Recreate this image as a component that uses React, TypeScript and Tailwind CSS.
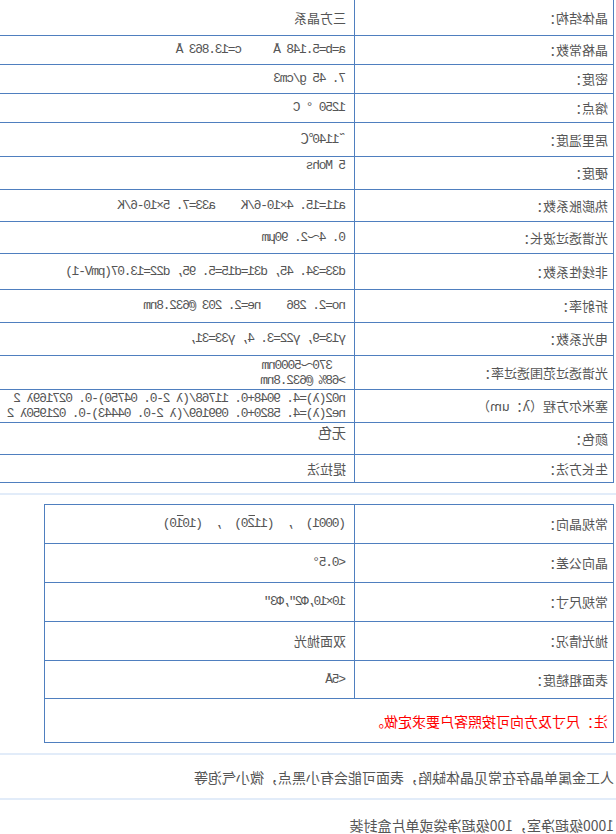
import { ReactNode } from 'react';

type Row = {
  label: ReactNode;
  value: ReactNode;
  h: string;
  top?: boolean;
  cjk?: boolean;
};

const specs: Row[] = [
  { label: '晶体结构：', value: '三方晶系', h: 'h-[36px]', cjk: true },
  { label: '晶格常数：', value: 'a=b=5.148 Å     c=13.863 Å', h: 'h-[29px]' },
  { label: '密度：', value: '7. 45 g/cm3', h: 'h-[29px]' },
  { label: '熔点：', value: '1250 ° C', h: 'h-[29px]' },
  { label: '居里温度：', value: '˜1140℃', h: 'h-[34px]' },
  { label: '硬度：', value: '5 Mohs', h: 'h-[33px]', top: true },
  { label: '热膨胀系数：', value: 'a11=15. 4×10-6/K    a33=7. 5×10-6/K', h: 'h-[32px]' },
  { label: '光谱透过波长：', value: '0. 4～2. 90μm', h: 'h-[32px]' },
  { label: '非线性系数：', value: 'd33=34. 45, d31=d15=5. 95, d22=13.07(pmV-1)', h: 'h-[36px]' },
  { label: '折射率：', value: 'no=2. 286    ne=2. 203 @632.8nm', h: 'h-[33px]' },
  { label: '电光系数：', value: 'γ13=9, γ22=3. 4, γ33=31,', h: 'h-[33px]' },
  {
    label: '光谱透过范围透过率：',
    value: (
      <div className="leading-[15px]">
        <div>  370～5000nm</div>
        <div>&gt;68% @632.8nm</div>
      </div>
    ),
    h: 'h-[34px]',
  },
  {
    label: '塞米尔方程（λ：um）',
    value: (
      <div className="leading-[15px]">
        <div>n02(λ)=4. 9048+0. 11768/(λ 2-0. 04750)-0. 027169λ 2</div>
        <div>ne2(λ)=4. 5820+0. 099169/(λ 2-0. 04443)-0. 021950λ 2</div>
      </div>
    ),
    h: 'h-[33px]',
  },
  { label: '颜色：', value: <span className="text-[14px]">无色</span>, h: 'h-[32px]', top: true, cjk: true },
  { label: '生长方法：', value: '提拉法', h: 'h-[28px]', cjk: true },
];

const options: Row[] = [
  {
    label: '常规晶向：',
    value: (
      <span>
        (0001)  ,  (11<span className="overline">2</span>0)  ,  (10<span className="overline">1</span>0)
      </span>
    ),
    h: 'h-[39px]',
  },
  { label: '晶向公差：', value: '<0.5°', h: 'h-[39px]' },
  { label: '常规尺寸：', value: <span className="tracking-[-1.6px]">10×10,Φ2″,Φ3″</span>, h: 'h-[39px]' },
  { label: '抛光情况：', value: '双面抛光', h: 'h-[39px]', cjk: true },
  { label: '表面粗糙度：', value: '<5Å', h: 'h-[38px]' },
];

const SpecRow = ({ row }: { row: Row }) => (
  <div className={`flex border-b border-[#4f7fbf] ${row.h}`}>
    <div className="flex w-[259px] shrink-0 items-center border-r border-[#4f7fbf] pl-[5px]">
      {row.label}
    </div>
    <div
      className={`flex flex-1 whitespace-pre pl-2 ${row.top ? 'items-start pt-[1px]' : 'items-center'} ${
        row.cjk ? '' : "font-['Liberation_Mono','Noto_Sans_CJK_SC',monospace] tracking-[-1.3px]"
      }`}
    >
      {row.value}
    </div>
  </div>
);

export default function App() {
  return (
    <div className="h-[834px] w-[616px] -scale-x-100 overflow-hidden bg-white font-['Noto_Sans_CJK_SC',sans-serif] text-[13px] leading-[16px] text-[#555]">
      {/* properties */}
      <div className="ml-[2px] w-[640px] border-l border-[#4f7fbf]">
        {specs.map((row, i) => (
          <SpecRow key={i} row={row} />
        ))}
      </div>

      <div className="mt-[10px] h-[2px] bg-[#e2ecf9]" />

      {/* standard options */}
      <div className="ml-[2px] mt-[9px] w-[570px] border border-b-0 border-[#4f7fbf]">
        {options.map((row, i) => (
          <SpecRow key={i} row={row} />
        ))}
        <div className="flex h-[44px] items-center border-b border-[#4f7fbf] pl-[5px] text-[14px] text-[#ff0000]">
          注：尺寸及方向可按照客户要求定做。
        </div>
      </div>

      <div className="mt-[10px] h-[2px] bg-[#e2ecf9]" />
      <div className="flex h-[43px] items-center pl-[2px] text-[14px]">
        人工金属单晶存在常见晶体缺陷，表面可能会有小黑点，微小气泡等
      </div>
      <div className="h-[2px] bg-[#e2ecf9]" />
      <div className="flex h-[50px] items-center pl-[2px] text-[14px]">
        1000级超净室，100级超净袋或单片盒封装
      </div>
    </div>
  );
}
